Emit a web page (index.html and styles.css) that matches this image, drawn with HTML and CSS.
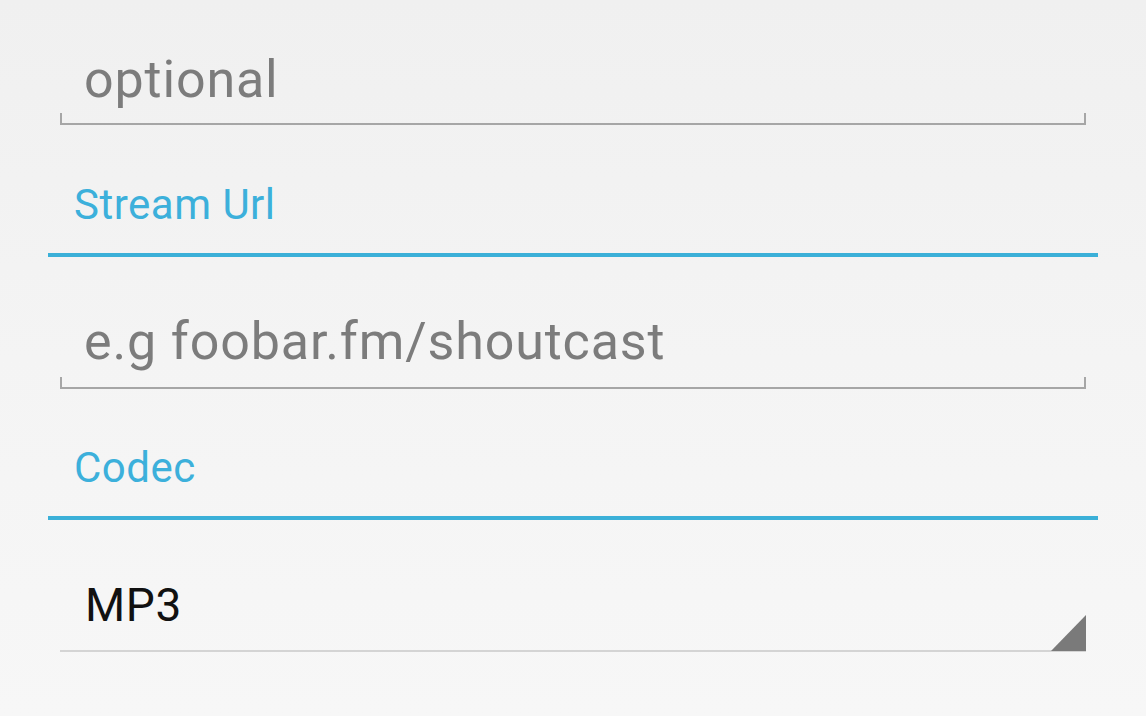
FILE: index.html
```html
<!DOCTYPE html>
<html>
<head>
<meta charset="utf-8">
<link rel="stylesheet" href="styles.css">
</head>
<body>
<div class="form">
  <div class="input">
    <div class="input-text">optional</div>
    <div class="input-line"></div>
  </div>
  <div class="label label-first">Stream Url</div>
  <div class="label-line"></div>
  <div class="input input-second">
    <div class="input-text">e.g foobar.fm/shoutcast</div>
    <div class="input-line"></div>
  </div>
  <div class="label">Codec</div>
  <div class="label-line"></div>
  <div class="spinner">
    <div class="spinner-text">MP3</div>
    <div class="spinner-arrow"></div>
  </div>
</div>
</body>
</html>
```

FILE: styles.css
```css
html, body {
  margin: 0;
  height: 100%;
}
body {
  background: linear-gradient(to bottom, #f0f0f0 0%, #f4f4f4 50%, #f7f7f7 100%);
  font-family: Roboto, "Noto Sans", sans-serif;
  overflow: hidden;
}
.form {
  display: flex;
  flex-direction: column;
  padding-top: 50px;
}
.input {
  margin-left: 60px;
  width: 1026px;
  display: flex;
  flex-direction: column;
}
.input-second {
  margin-top: 55px;
}
.input-text {
  height: 60px;
  line-height: 60px;
  font-size: 52px;
  letter-spacing: 0.85px;
  color: #7c7c7c;
  padding-left: 24px;
  white-space: nowrap;
}
.input-line {
  margin-top: 3px;
  height: 10px;
  border: 2px solid #a6a6a6;
  border-top: none;
}
.input-second .input-line {
  margin-top: 5px;
}
.label {
  margin-top: 54px;
  margin-left: 48px;
  padding-left: 26px;
  height: 50px;
  line-height: 50px;
  font-size: 42px;
  letter-spacing: 0.5px;
  color: #3cb0db;
}
.label-first {
  margin-top: 55px;
}
.label-line {
  margin-top: 23px;
  margin-left: 48px;
  width: 1050px;
  height: 4px;
  background: #3bb0d8;
}
.spinner {
  margin-top: 57px;
  margin-left: 60px;
  width: 1026px;
  display: flex;
  justify-content: space-between;
  align-items: flex-end;
  border-bottom: 2px solid #d4d4d4;
}
.spinner-text {
  height: 56px;
  line-height: 56px;
  font-size: 46px;
  letter-spacing: 0.6px;
  color: #111111;
  padding-left: 25px;
  margin-bottom: 17px;
}
.spinner-arrow {
  width: 35px;
  height: 36px;
  background: #7a7a7a;
  clip-path: polygon(100% 0, 100% 100%, 0 100%);
  margin-bottom: -1px;
}
```
